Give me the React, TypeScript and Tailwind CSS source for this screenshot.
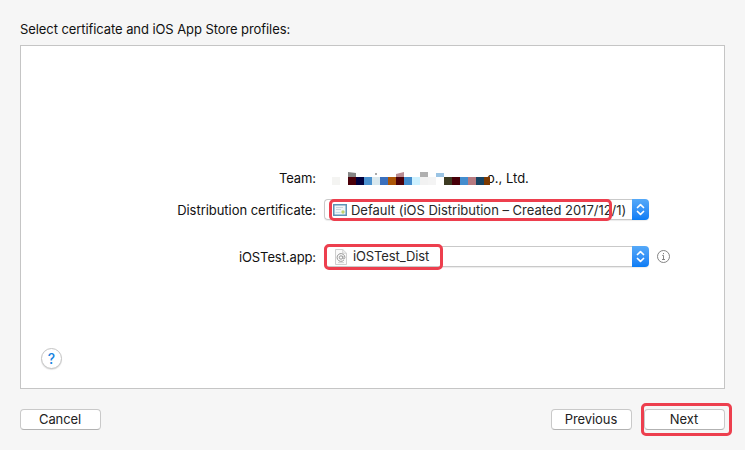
import type { ReactNode } from "react";

const mosaic = [
  "#f4f4f2", "#ffffff", "#4b0009", "#00003d", "#4b92d0", "#d9e8ee", "#3b70bd", "#ac5608", "#4b0009",
  "#438dce", "#cdf1ff", "#f2f2f2", "#f4f4f4", "#ffffff", "#3d3b22", "#480009", "#438dce", "#b67a80", "#174565", "#7c3900",
];

function Stepper() {
  return (
    <span className="flex h-[21px] w-[17px] shrink-0 items-center justify-center rounded-r-[4px] bg-linear-to-b from-[#55a9f8] to-[#087cf5]">
      <svg width="9" height="13" viewBox="0 0 9 13" fill="none" stroke="white" strokeWidth="1.7" strokeLinecap="round" strokeLinejoin="round">
        <path d="M1.5 4.5 4.5 1.6 7.5 4.5M1.5 8.5 4.5 11.4 7.5 8.5" />
      </svg>
    </span>
  );
}

function Select({ icon, children }: { icon: ReactNode; children: ReactNode }) {
  return (
    <div className="flex h-[21px] w-[325px] items-center rounded-[4px] bg-white shadow-[0_1px_1px_rgba(0,0,0,0.08)]">
      <div className="flex h-[21px] flex-1 items-center rounded-l-[4px] border border-r-0 border-[#c9c9c9] pl-[8px] whitespace-nowrap">
        {icon}
        {children}
      </div>
      <Stepper />
    </div>
  );
}

function CertificateIcon() {
  return (
    <svg className="shrink-0" width="14" height="12" viewBox="0 0 14 12">
      <rect x=".75" y=".75" width="12.5" height="10.5" fill="#eef6f8" stroke="#5f93b5" strokeWidth="1.5" />
      <path d="M3 3.5h7M3 5.5h5" stroke="#c0cdd5" strokeWidth=".8" />
      <path d="M2.5 8.5h5" stroke="#b9d8e8" strokeWidth=".8" />
      <circle cx="10" cy="8" r="1.7" fill="#c0d36b" />
    </svg>
  );
}

function ProfileIcon() {
  return (
    <svg className="block shrink-0" width="12" height="16" viewBox="0 0 12 16" fill="none">
      <path d="M.5.5h7.3l3.7 3.7v11.3H.5z" fill="#fafafa" stroke="#cfcfcf" />
      <path d="M7.8.5v3.7h3.7" stroke="#cfcfcf" />
      <path d="M8.8 11.2A3.9 3.9 0 1 1 9.9 8.5c0 1.7-2 1.9-2 .2V6.8" stroke="#999" strokeWidth="1" />
      <circle cx="6" cy="8.5" r="1.7" stroke="#999" />
      <path d="M3 13.6h6" stroke="#ccc" strokeWidth=".8" />
    </svg>
  );
}

function Button({ children }: { children: ReactNode }) {
  return (
    <button className="flex h-[21px] w-[81px] items-center justify-center rounded-[4px] border border-[#c9c9c9] border-b-[#b2b2b2] bg-white pb-[2px] text-[#222]">
      {children}
    </button>
  );
}

export default function App() {
  return (
    <main className="h-[450px] w-[745px] overflow-hidden bg-[#f6f6f6] px-[20px] pt-[19px] font-['Inter',sans-serif] text-[13px] leading-[20px] text-[#111]">
      <h1 className="h-[26px] whitespace-nowrap"><span className="tracking-[-0.08px]">Select certificate and iOS App Store profiles:</span></h1>
      <section className="flex h-[344px] w-[705px] flex-col border border-[#c5c5c5] bg-white pt-[122px]">
        <div className="flex h-[20px] gap-[16px]">
          <span className="w-[295px] text-right tracking-[-0.1px]">Team:</span>
          <div className="flex items-start">
            <div className="relative mt-[9px] h-[8px] w-[157px]">
              <div className="flex h-[8px] w-[158px] overflow-hidden">
                {mosaic.map((color, i) => (
                  <span key={i} className="h-[8px] w-[8px] shrink-0" style={{ backgroundColor: color }} />
                ))}
              </div>
              <svg className="absolute -top-[5px] left-0" width="157" height="5">
                <path d="M16 0l8 1v4h-8z" fill="#858585" />
                <path d="M43 1h2v2h-2z" fill="#aaa" />
                <path d="M64 2l8-2v5h-8z" fill="#b98b91" />
                <path d="M88 0h8v5h-8z" fill="#b0b0b0" />
                <path d="M104 1h8v4h-8z" fill="#9bc4e4" />
              </svg>
            </div>
            <span className="-ml-[2px]">o., Ltd.</span>
          </div>
        </div>
        <div className="mt-[11px] flex h-[21px] gap-[8px]">
          <span className="w-[295px] pt-[1px] text-right tracking-[-0.04px] whitespace-nowrap">Distribution certificate:</span>
          <div className="relative">
            <Select icon={<CertificateIcon />}>
              <span className="ml-[4px] tracking-[-0.01px] text-[#272727]">Default (iOS Distribution – Created 2017/12/1)</span>
            </Select>
            <span className="absolute top-0 left-[5px] h-[22px] w-[283px] rounded-[5px] border-3 border-[#ed3f4e]" />
          </div>
        </div>
        <div className="mt-[26px] flex h-[21px] gap-[8px]">
          <span className="w-[295px] pt-[1px] text-right tracking-[-0.1px]">iOSTest.app:</span>
          <div className="relative flex items-center gap-[8px]">
            <Select icon={<span className="ml-[2px]"><ProfileIcon /></span>}>
              <span className="ml-[6px] pb-[1px] tracking-[-0.12px] text-[#272727]">iOSTest_Dist</span>
            </Select>
            <svg width="13" height="13" viewBox="0 0 13 13" fill="none" stroke="#777" strokeWidth=".9">
              <circle cx="6.5" cy="6.5" r="6" />
              <path d="M5.2 5.4h1.3v4M5 9.5h3M6.5 3v1.1" />
            </svg>
            <span className="absolute -top-[2px] left-0 h-[26px] w-[119px] rounded-[5px] border-3 border-[#ed3f4e]" />
          </div>
        </div>
        <button className="mt-auto mb-[19px] ml-[20px] flex size-[21px] items-center justify-center rounded-full border border-[#c4c4c4] bg-white text-[14px] font-medium text-[#1683df] shadow-[0_1px_1px_rgba(0,0,0,0.12)]">?</button>
      </section>
      <footer className="mt-[20px] flex w-[705px] gap-[12px]">
        <Button><span className="-ml-[1px] tracking-[-0.1px]">Cancel</span></Button>
        <div className="ml-auto"><Button><span className="-ml-[1px] tracking-[-0.1px]">Previous</span></Button></div>
        <div className="relative">
          <Button><span className="-ml-[1px]">Next</span></Button>
          <span className="absolute -top-[6px] -left-[3px] h-[33px] w-[91px] rounded-[5px] border-3 border-[#ed3f4e]" />
        </div>
      </footer>
    </main>
  );
}
